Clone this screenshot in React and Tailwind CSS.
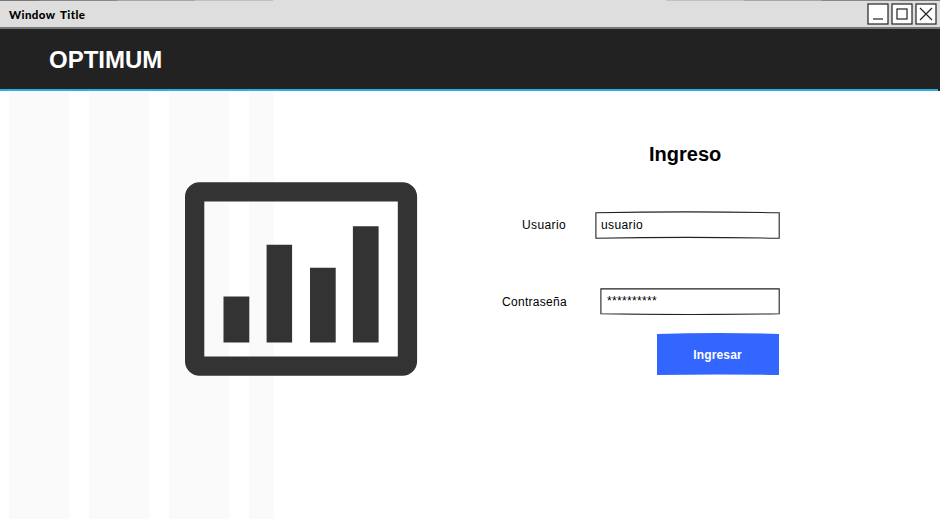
import React from "react";

function WindowButton({ children }) {
  return (
    <button className="block h-[22px] w-[22px]">
      <svg width="22" height="22" viewBox="0 0 22 22" fill="none" stroke="#222" className="block">
        <rect x="1" y="1" width="20" height="20" fill="#fff" strokeWidth="1.2" />
        {children}
      </svg>
    </button>
  );
}

function TitleBar() {
  return (
    <div className="flex h-[29px] items-start justify-between border-b-2 border-[#777] bg-[#dedede] pr-[3px]">
      <span className="flex-1">
        <svg width="860" height="27" className="block overflow-visible">
          <path d="M0 0.5H39" stroke="#777" />
          <path d="M39 0.5H117" stroke="#888" />
          <path d="M117 0.5H195" stroke="#a5a5a5" />
          <path d="M195 0.5H273" stroke="#c2c2c2" />
          <path d="M666 0.5H744" stroke="#c2c2c2" />
          <path d="M744 0.5H822" stroke="#a5a5a5" />
          <path d="M822 0.5H900" stroke="#888" />
          <path d="M900 0.5H940" stroke="#777" />
          <text x="9" y="19" textLength="76" fontSize="11.5" fontWeight="900" fontFamily="Lato, sans-serif" wordSpacing="2">Window Title</text>
        </svg>
      </span>
      <div className="flex gap-[2px] pt-[3px]">
        <WindowButton><path d="M6 16H16" strokeWidth="1.2" /></WindowButton>
        <WindowButton><rect x="6" y="6" width="10" height="10" strokeWidth="1.2" /></WindowButton>
        <WindowButton><path d="M5 5L17 17M17 5L5 17" strokeWidth="1.2" /></WindowButton>
      </div>
    </div>
  );
}

function ChartLogo() {
  return (
    <svg width="233" height="195" viewBox="185 182 233 195" fill="#333" className="block">
      <path fillRule="evenodd" d="M199.5 182.3H402.6A14.5 14.5 0 0 1 417.1 196.8V361.2A14.5 14.5 0 0 1 402.6 375.7H199.5A14.5 14.5 0 0 1 185 361.2V196.8A14.5 14.5 0 0 1 199.5 182.3ZM204.3 201.6V356.4H397.8V201.6Z" />
      <path d="M223.5 296.6H249.3V342.6H223.5ZM266.6 244.7H292.1V342.6H266.6ZM310 267.7H335.7V342.6H310ZM352.9 226.3H378.6V342.6H352.9Z" />
    </svg>
  );
}

export default function App() {
  return (
    <div className="flex h-[519px] w-[940px] flex-col overflow-hidden bg-white font-['Liberation_Sans',Arial,sans-serif] text-black">
      <TitleBar />
      <header className="flex h-[62px] items-center border-r-2 border-[#222] bg-[#222]">
        <div className="flex h-full flex-1 items-center border-b-2 border-[#2cb0e2] pt-[2px] pl-[49px]">
          <h1 className="text-[24px] leading-[28px] font-bold text-white">OPTIMUM</h1>
        </div>
      </header>
      <main className="flex flex-1 bg-[repeating-linear-gradient(90deg,#fff_0,#fff_9px,#fafafa_9px,#fafafa_69px,#fff_69px,#fff_80px)] bg-[length:274px_100%] bg-no-repeat">
        <div className="pt-[91px] pl-[185px]">
          <ChartLogo />
        </div>
        <form className="ml-[84px] flex w-[278px] flex-col pt-[51px] text-[12px]">
          <h2 className="ml-[147px] text-[20px] leading-[24px] font-bold">Ingreso</h2>
          <div className="mt-[45px] flex h-[28px] items-center justify-between">
            <label className="pl-[20px] tracking-[0.4px]">Usuario</label>
            <div className="grid h-[28px] w-[185px] items-center">
              <svg width="185" height="28" className="col-start-1 row-start-1 block" fill="#fff" stroke="#222" strokeWidth="1.1">
                <path d="M0.9 1.8Q92 0 184.2 1.8V27.2Q92 25.6 0.9 27.2Z" />
              </svg>
              <span className="z-10 col-start-1 row-start-1 pl-[6px] tracking-[0.4px]">usuario</span>
            </div>
          </div>
          <div className="mt-[48px] flex h-[28px] items-center justify-between">
            <label className="pt-[2px] tracking-[0.3px]">Contraseña</label>
            <div className="grid h-[28px] w-[180px]">
              <svg width="180" height="28" className="col-start-1 row-start-1 block" fill="#fff" stroke="#222" strokeWidth="1.1">
                <path d="M0.9 1.9H179.2V26.8Q90 28.2 0.9 26.8Z" />
              </svg>
              <span className="z-10 col-start-1 row-start-1 pt-[5px] pl-[7px] tracking-[0.33px]">**********</span>
            </div>
          </div>
          <button type="button" className="mt-[17px] ml-auto grid h-[43px] w-[123px] items-center text-[12px] font-bold text-white">
            <svg width="123" height="43" className="col-start-1 row-start-1 block" fill="#36f">
              <path d="M0 2Q61 0 122 2V43Q61 41.8 0 43Z" />
            </svg>
            <span className="z-10 col-start-1 row-start-1 pt-[2px] pr-[2px] tracking-[0.15px]">Ingresar</span>
          </button>
        </form>
      </main>
    </div>
  );
}
